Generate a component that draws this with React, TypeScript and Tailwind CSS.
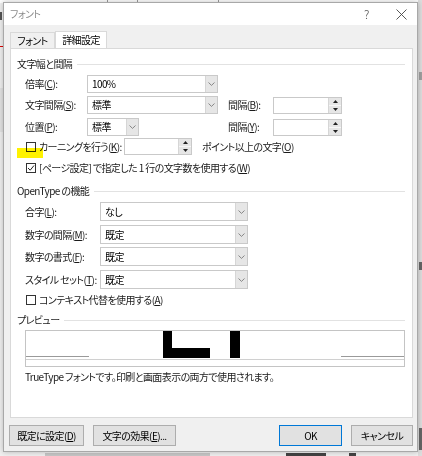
import React from 'react';

const Acc = ({ k }: { k: string }) => <span className="underline">{k}</span>;

const Chevron = () => (
  <svg width="7" height="4" viewBox="0 0 7 4">
    <path d="M0.5 0.5 L3.5 3.4 L6.5 0.5" fill="none" stroke="#7a7a7a" strokeWidth="0.9" />
  </svg>
);

const Combo = ({ value, className }: { value: string; className: string }) => (
  <div className={`flex shrink-0 border border-[#c9c9c9] bg-white ${className}`}>
    <span className="flex flex-1 items-center pl-[4px] text-black">{value}</span>
    <div className="flex w-[12px] items-center justify-center border-l border-[#d6d6d6] bg-[#e6e6e6]">
      <Chevron />
    </div>
  </div>
);

const Spin = ({ className }: { className: string }) => (
  <div className={`flex shrink-0 border border-[#c9c9c9] bg-white ${className}`}>
    <div className="flex-1" />
    <div className="flex w-[13px] flex-col border-l border-[#d6d6d6] bg-[#e6e6e6]">
      <div className="flex flex-1 items-center justify-center">
        <svg width="5" height="3" viewBox="0 0 5 3">
          <path d="M0 3 L2.5 0 L5 3 Z" fill="#222" />
        </svg>
      </div>
      <div className="h-px bg-[#f7f7f7]" />
      <div className="flex flex-1 items-center justify-center">
        <svg width="5" height="3" viewBox="0 0 5 3">
          <path d="M0 0 L2.5 3 L5 0 Z" fill="#222" />
        </svg>
      </div>
    </div>
  </div>
);

const Check = ({ checked = false }: { checked?: boolean }) => (
  <div className="flex h-[10px] w-[10px] shrink-0 items-center justify-center border border-[#333] bg-white">
    {checked && (
      <svg width="8" height="8" viewBox="0 0 8 8">
        <path d="M1 4 L3.2 6.2 L7 1.5" fill="none" stroke="#222" strokeWidth="1" />
      </svg>
    )}
  </div>
);

const Section = ({ title }: { title: string }) => (
  <div className="flex h-[16px] items-center pl-[6px] pr-[7px]">
    <span className="text-[#1a1a1a]">{title}</span>
    <div className="ml-[5px] h-px flex-1 bg-[#e2e2e2]" />
  </div>
);

const Btn = ({ children, className }: { children: React.ReactNode; className: string }) => (
  <div className={`flex h-[21px] items-center justify-center border bg-[#e1e1e1] text-black ${className}`}>
    {children}
  </div>
);

export default function App() {
  return (
    <div className="relative h-[456px] w-[422px] overflow-hidden bg-[#f1f1f1] text-[10px] leading-none tracking-[-0.6px] whitespace-nowrap [font-family:'Noto_Sans_CJK_JP','Noto_Sans',sans-serif] [font-feature-settings:'palt']">
      {/* word window behind */}
      <div className="absolute left-0 top-0 h-[3px] w-[422px] bg-white" />
      <div className="absolute left-[107px] top-0 h-[3px] w-px bg-[#9a9a9a]" />
      <div className="absolute left-[137px] top-0 h-[3px] w-px bg-[#9a9a9a]" />
      <div className="absolute left-[218px] top-0 h-[3px] w-px bg-[#9a9a9a]" />
      <div className="absolute left-0 top-[12px] h-[8px] w-[2px] bg-[#555]" />
      <div className="absolute left-0 top-[46px] h-px w-[3px] bg-[#e00000]" />
      <div className="absolute left-0 top-[88px] h-[44px] w-[3px] bg-[#e4e4e4]" />
      <div className="absolute left-[418px] top-0 h-[456px] w-[4px] bg-[#dedede]" />
      <div className="absolute left-[419px] top-[72px] h-[8px] w-[3px] bg-[#a0a0a0]" />
      <div className="absolute left-[419px] top-[262px] h-[8px] w-[3px] bg-[#666]" />
      <div className="absolute left-[419px] top-[428px] h-[22px] w-[3px] bg-[#666]" />
      <div className="absolute left-[45px] top-[453px] h-[3px] w-[165px] bg-[#c8c8c8]" />
      <div className="absolute left-[286px] top-[453px] h-[3px] w-[40px] bg-[#444]" />
      <div className="absolute left-[349px] top-[453px] h-[3px] w-[7px] bg-[#444]" />

      {/* dialog */}
      <div className="absolute left-[3px] top-[2px] flex h-[450px] w-[415px] flex-col border border-[#a8a8a8] bg-[#f0f0f0] shadow-[0_0_6px_rgba(0,0,0,0.25)]">
        <div className="flex h-[22px] items-center bg-white pl-[6px] text-[#8c8c8c]">
          <span className="w-[50px]">フォント</span>
          <span className="ml-[304px] text-[12px] font-light text-[#555]">?</span>
          <svg className="ml-[27px]" width="11" height="11" viewBox="0 0 11 11">
            <path d="M0.5 0.5 L10.5 10.5 M10.5 0.5 L0.5 10.5" stroke="#444" strokeWidth="0.9" />
          </svg>
        </div>

        <div className="flex h-[23px] items-end pl-[6px]">
          <div className="flex h-[16px] w-[45px] items-center justify-center border border-b-0 border-[#d9d9d9] text-black">
            フォント
          </div>
          <div className="relative -mb-px flex h-[18px] w-[52px] items-center justify-center border border-b-0 border-[#d9d9d9] bg-white pb-[1px] text-black">
            詳細設定
          </div>
        </div>

        <div className="relative ml-[6px] flex h-[370px] w-[403px] flex-col border border-[#d9d9d9] bg-white text-[#1a1a1a]">
          <div className="mt-[7px]">
            <Section title="文字幅と間隔" />
          </div>

          <div className="mt-[3px] flex h-[18px] items-center pl-[14px]">
            <span className="w-[62px] shrink-0">倍率(<Acc k="C" />):</span>
            <Combo value="100%" className="h-[18px] w-[131px]" />
          </div>

          <div className="mt-[3px] flex h-[18px] items-center pl-[14px]">
            <span className="w-[62px] shrink-0">文字間隔(<Acc k="S" />):</span>
            <Combo value="標準" className="h-[18px] w-[131px]" />
            <span className="ml-[10px] w-[45px] shrink-0">間隔(<Acc k="B" />):</span>
            <Spin className="h-[17px] w-[69px]" />
          </div>

          <div className="mt-[4px] flex h-[18px] items-center pl-[14px]">
            <span className="w-[62px] shrink-0">位置(<Acc k="P" />):</span>
            <Combo value="標準" className="h-[18px] w-[52px]" />
            <span className="ml-[89px] w-[45px] shrink-0">間隔(<Acc k="Y" />):</span>
            <Spin className="h-[17px] w-[69px]" />
          </div>

          <div className="mt-[2px] flex h-[17px] items-center pl-[15px]">
            <Check />
            <span className="ml-[3px] w-[85px] shrink-0">カーニングを行う(<Acc k="K" />):</span>
            <Spin className="h-[17px] w-[68px]" />
            <span className="ml-[10px]">ポイント以上の文字(<Acc k="O" />)</span>
          </div>

          <div className="mt-[6px] flex h-[14px] items-center pl-[15px]">
            <Check checked />
            <span className="ml-[3px]">[ページ設定] で指定した 1 行の文字数を使用する(<Acc k="W" />)</span>
          </div>

          <div className="mt-[8px]">
            <Section title="OpenType の機能" />
          </div>

          <div className="mt-[3px] flex h-[19px] items-center pl-[14px]">
            <span className="w-[75px] shrink-0">合字(<Acc k="L" />):</span>
            <Combo value="なし" className="h-[19px] w-[148px]" />
          </div>
          <div className="mt-[4px] flex h-[19px] items-center pl-[14px]">
            <span className="w-[75px] shrink-0">数字の間隔(<Acc k="M" />):</span>
            <Combo value="既定" className="h-[19px] w-[148px]" />
          </div>
          <div className="mt-[3px] flex h-[19px] items-center pl-[14px]">
            <span className="w-[75px] shrink-0">数字の書式(<Acc k="F" />):</span>
            <Combo value="既定" className="h-[19px] w-[148px]" />
          </div>
          <div className="mt-[4px] flex h-[19px] items-center pl-[14px]">
            <span className="w-[75px] shrink-0">スタイル セット(<Acc k="T" />):</span>
            <Combo value="既定" className="h-[19px] w-[148px]" />
          </div>

          <div className="mt-[4px] flex h-[14px] items-center pl-[15px]">
            <Check />
            <span className="ml-[3px]">コンテキスト代替を使用する(<Acc k="A" />)</span>
          </div>

          <div className="mt-[5px]">
            <Section title="プレビュー" />
          </div>

          <div className="relative ml-[14px] mt-[2px] h-[37px] w-[380px] overflow-hidden border border-[#c4c4c4] bg-white">
            <div className="absolute left-0 top-[25px] h-px w-[63px] bg-[#9a9a9a]" />
            <div className="absolute right-0 top-[25px] h-px w-[63px] bg-[#9a9a9a]" />
            <div className="absolute left-0 top-[28px] h-px w-full bg-[#d0d0d0]" />
            <div className="absolute left-[137px] top-0 h-[27px] w-[9px] bg-black" />
            <div className="absolute left-[137px] top-[17px] h-[10px] w-[47px] bg-black" />
            <div className="absolute left-[204px] top-0 h-[27px] w-[10px] bg-black" />
          </div>

          <div className="mt-[3px] flex h-[14px] items-center pl-[14px]">
            TrueType フォントです。印刷と画面表示の両方で使用されます。
          </div>

          {/* yellow marker */}
          <div className="absolute left-[6px] top-[99px] h-[10px] w-[26px] bg-[#fff200] mix-blend-multiply" />
        </div>

        <div className="flex h-[33px] pt-[7px]">
          <Btn className="ml-[5px] w-[75px] border-[#adadad]">既定に設定(<Acc k="D" />)</Btn>
          <Btn className="ml-[9px] w-[83px] border-[#adadad]">文字の効果(<Acc k="E" />)...</Btn>
          <Btn className="ml-[103px] w-[63px] border-[#0078d7]">OK</Btn>
          <Btn className="ml-[9px] w-[62px] border-[#adadad]">キャンセル</Btn>
        </div>
      </div>
    </div>
  );
}
